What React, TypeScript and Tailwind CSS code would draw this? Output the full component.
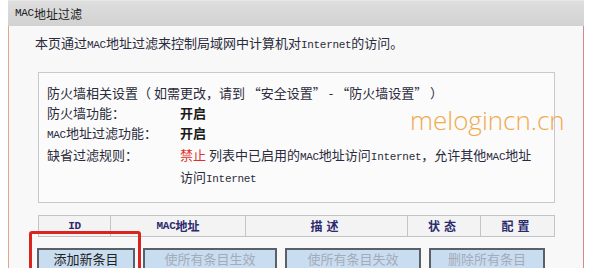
import React from "react";

const cjk = '"Noto Sans CJK SC", "Noto Sans", sans-serif';

function A({ children }: { children: React.ReactNode }) {
  return (
    <span className="text-[11px] tracking-[-0.3px]" style={{ fontFamily: '"Liberation Mono", monospace' }}>
      {children}
    </span>
  );
}

function Row({ label, children }: { label: React.ReactNode; children?: React.ReactNode }) {
  return (
    <div className="flex leading-[20px]">
      <div className="w-[133px] shrink-0">{label}</div>
      <div className="flex-1">{children}</div>
    </div>
  );
}

const buttons = [
  { text: "添加新条目", w: "w-[98px]", active: true },
  { text: "使所有条目生效", w: "w-[134px]", active: false },
  { text: "使所有条目失效", w: "w-[136px]", active: false },
  { text: "删除所有条目", w: "w-[116px]", active: false },
];

export default function App() {
  return (
    <div
      className="relative w-[594px] h-[268px] overflow-hidden bg-white text-[13px] text-[#2b2b3b]"
      style={{ fontFamily: cjk }}
    >
      <div className="ml-[8px] w-[576px] h-[26px] border-t border-[#e8e8e8] bg-gradient-to-b from-[#dedede] to-[#d2d2d2] pl-[7px] flex items-center text-[12px] text-[#222]">
        <A>MAC</A>地址过滤
      </div>

      <div className="ml-[8px] w-[576px] h-[242px] border-l border-l-[#e4a58c] border-r border-r-[#d48a8a] bg-[#f8f8f8] pl-[26px] pt-[7px]">
        <div className="leading-[20px]">
          本页通过<A>MAC</A>地址过滤来控制局域网中计算机对<A>Internet</A>的访问。
        </div>

        <div className="ml-[3px] mt-[17px] w-[517px] border border-[#c9c9c9] bg-[#fbfbfb] pl-[8px] pt-[10px] pb-[13px]">
          <div className="leading-[20px] whitespace-nowrap">
            防火墙相关设置（ 如需更改，请到 “安全设置” - “防火墙设置” ）
          </div>
          <Row label="防火墙功能：">
            <b className="text-[#1a1a1a]">开启</b>
          </Row>
          <Row
            label={
              <>
                <A>MAC</A>地址过滤功能：
              </>
            }
          >
            <b className="text-[#1a1a1a]">开启</b>
          </Row>
          <Row label="缺省过滤规则：">
            <span className="text-[#e0302c]">禁止</span> 列表中已启用的<A>MAC</A>地址访问<A>Internet</A>，允许其他<A>MAC</A>地址
          </Row>
          <Row label="">
            访问<A>Internet</A>
          </Row>
        </div>

        <div className="ml-[3px] mt-[12px] w-[517px] h-[22px] flex border border-[#c4c4c4] bg-[#f3f3f3] font-bold text-[#2a2a6e] text-[12px]">
          <div className="w-[72px] flex items-center justify-center border-r border-[#c4c4c4]">
            <A>ID</A>
          </div>
          <div className="w-[135px] flex items-center justify-center border-r border-[#c4c4c4]">
            <A>MAC</A>地址
          </div>
          <div className="w-[162px] flex items-center justify-center border-r border-[#c4c4c4] tracking-[4px]">
            描述
          </div>
          <div className="w-[73px] flex items-center justify-center border-r border-[#c4c4c4] tracking-[4px]">
            状态
          </div>
          <div className="flex-1 flex items-center justify-center tracking-[4px]">配置</div>
        </div>

        <div className="ml-[2px] mt-[11px] flex gap-[8px]">
          {buttons.map((b) => (
            <div
              key={b.text}
              className={`${b.w} h-[22px] flex items-center justify-center border-2 border-[#5a6068] bg-[#c9ddf1] text-[13px] ${
                b.active ? "text-[#222]" : "text-[#a4abb8]"
              }`}
            >
              {b.text}
            </div>
          ))}
        </div>
      </div>

      <div className="absolute left-[29px] top-[231px] w-[112px] h-[44px] border-[3px] border-[#d8251f] rounded-[3px]" />

      <div
        className="absolute left-[410px] top-[107px] text-[26px] leading-[26px] text-[#f0a23a] opacity-90 font-light"
        style={{ fontFamily: '"Open Sans", sans-serif' }}
      >
        melogincn.cn
      </div>
    </div>
  );
}
